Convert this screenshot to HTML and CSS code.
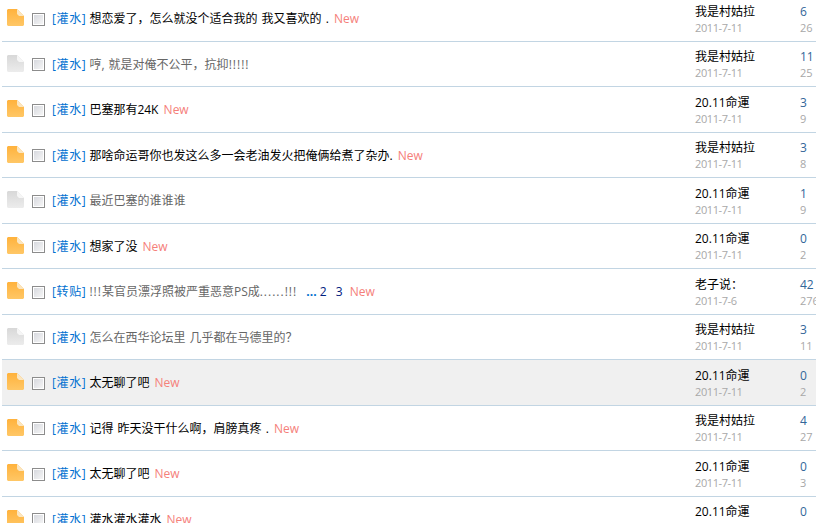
FILE: index.html
```html
<!DOCTYPE html>
<html lang="zh">
<head>
<meta charset="utf-8">
<title>主题列表</title>
<link rel="stylesheet" href="styles.css">
</head>
<body>
<svg class="defs" width="0" height="0" aria-hidden="true">
  <defs>
    <linearGradient id="hot" x1="0" y1="0" x2="0" y2="1"><stop offset="0" stop-color="#ffb23c"/><stop offset="1" stop-color="#ffc766"/></linearGradient>
    <linearGradient id="cold" x1="0" y1="0" x2="0" y2="1"><stop offset="0" stop-color="#d8d8d8"/><stop offset="1" stop-color="#ececec"/></linearGradient>
    <symbol id="doc-hot" viewBox="0 0 17 17"><path d="M1 0H10L17 7V16L16 17H1L0 16V1Z" fill="url(#hot)"/><path d="M10 0L17 7H12L10 5Z" fill="#fbe6c0"/></symbol>
    <symbol id="doc-cold" viewBox="0 0 17 17"><path d="M1 0H10L17 7V16L16 17H1L0 16V1Z" fill="url(#cold)"/><path d="M10 0L17 7H12L10 5Z" fill="#f6f6f6"/></symbol>
  </defs>
</svg>
<ul class="threads">
  <li class="row">
    <svg class="doc"><use href="#doc-hot"/></svg><span class="check"></span>
    <div class="title"><a class="tag">[灌水]</a> <a class="subject">想恋爱了，怎么就没个适合我的 我又喜欢的 .</a> <span class="new">New</span></div>
    <div class="author"><span class="name">我是村姑拉</span><span class="date">2011-7-11</span></div>
    <div class="stats"><span class="replies">6</span><span class="views">26</span></div>
  </li>
  <li class="row">
    <svg class="doc"><use href="#doc-cold"/></svg><span class="check"></span>
    <div class="title"><a class="tag">[灌水]</a> <a class="subject read">哼, 就是对俺不公平，抗抑<span class="wide">!!!!!</span></a></div>
    <div class="author"><span class="name">我是村姑拉</span><span class="date">2011-7-11</span></div>
    <div class="stats"><span class="replies">11</span><span class="views">25</span></div>
  </li>
  <li class="row">
    <svg class="doc"><use href="#doc-hot"/></svg><span class="check"></span>
    <div class="title"><a class="tag">[灌水]</a> <a class="subject">巴塞那有24K</a> <span class="new">New</span></div>
    <div class="author"><span class="name">20.11命運</span><span class="date">2011-7-11</span></div>
    <div class="stats"><span class="replies">3</span><span class="views">9</span></div>
  </li>
  <li class="row">
    <svg class="doc"><use href="#doc-hot"/></svg><span class="check"></span>
    <div class="title"><a class="tag">[灌水]</a> <a class="subject">那啥命运哥你也发这么多一会老油发火把俺俩给煮了杂办.</a> <span class="new">New</span></div>
    <div class="author"><span class="name">我是村姑拉</span><span class="date">2011-7-11</span></div>
    <div class="stats"><span class="replies">3</span><span class="views">8</span></div>
  </li>
  <li class="row">
    <svg class="doc"><use href="#doc-cold"/></svg><span class="check"></span>
    <div class="title"><a class="tag">[灌水]</a> <a class="subject read">最近巴塞的谁谁谁</a></div>
    <div class="author"><span class="name">20.11命運</span><span class="date">2011-7-11</span></div>
    <div class="stats"><span class="replies">1</span><span class="views">9</span></div>
  </li>
  <li class="row">
    <svg class="doc"><use href="#doc-hot"/></svg><span class="check"></span>
    <div class="title"><a class="tag">[灌水]</a> <a class="subject">想家了没</a> <span class="new">New</span></div>
    <div class="author"><span class="name">20.11命運</span><span class="date">2011-7-11</span></div>
    <div class="stats"><span class="replies">0</span><span class="views">2</span></div>
  </li>
  <li class="row">
    <svg class="doc"><use href="#doc-hot"/></svg><span class="check"></span>
    <div class="title"><a class="tag">[转贴]</a> <a class="subject read"><span class="wide">!!!</span>某官员漂浮照被严重恶意PS成<span class="wide">......!!!</span></a> <span class="pages"><span class="dots">...</span> <a>2</a> <a>3</a></span> <span class="new">New</span></div>
    <div class="author"><span class="name">老子说：</span><span class="date">2011-7-6</span></div>
    <div class="stats"><span class="replies">42</span><span class="views">276</span></div>
  </li>
  <li class="row">
    <svg class="doc"><use href="#doc-cold"/></svg><span class="check"></span>
    <div class="title"><a class="tag">[灌水]</a> <a class="subject read">怎么在西华论坛里 几乎都在马德里的？</a></div>
    <div class="author"><span class="name">我是村姑拉</span><span class="date">2011-7-11</span></div>
    <div class="stats"><span class="replies">3</span><span class="views">11</span></div>
  </li>
  <li class="row active">
    <svg class="doc"><use href="#doc-hot"/></svg><span class="check"></span>
    <div class="title"><a class="tag">[灌水]</a> <a class="subject">太无聊了吧</a> <span class="new">New</span></div>
    <div class="author"><span class="name">20.11命運</span><span class="date">2011-7-11</span></div>
    <div class="stats"><span class="replies">0</span><span class="views">2</span></div>
  </li>
  <li class="row">
    <svg class="doc"><use href="#doc-hot"/></svg><span class="check"></span>
    <div class="title"><a class="tag">[灌水]</a> <a class="subject">记得 昨天没干什么啊，肩膀真疼 .</a> <span class="new">New</span></div>
    <div class="author"><span class="name">我是村姑拉</span><span class="date">2011-7-11</span></div>
    <div class="stats"><span class="replies">4</span><span class="views">27</span></div>
  </li>
  <li class="row">
    <svg class="doc"><use href="#doc-hot"/></svg><span class="check"></span>
    <div class="title"><a class="tag">[灌水]</a> <a class="subject">太无聊了吧</a> <span class="new">New</span></div>
    <div class="author"><span class="name">20.11命運</span><span class="date">2011-7-11</span></div>
    <div class="stats"><span class="replies">0</span><span class="views">3</span></div>
  </li>
  <li class="row">
    <svg class="doc"><use href="#doc-hot"/></svg><span class="check"></span>
    <div class="title"><a class="tag">[灌水]</a> <a class="subject">灌水灌水灌水</a> <span class="new">New</span></div>
    <div class="author"><span class="name">20.11命運</span><span class="date">2011-7-11</span></div>
    <div class="stats"><span class="replies">0</span><span class="views">1</span></div>
  </li>
</ul>
</body>
</html>
```
FILE: styles.css
```css
html, body {
  margin: 0;
  height: 523px;
  overflow: hidden;
  background: #fff;
}
body {
  font: 12px/17px Tahoma, "Open Sans", "Noto Sans CJK SC", sans-serif;
  color: #000;
}
.defs { position: absolute; }
.threads {
  list-style: none;
  margin: -4px 0 0 2px;
  padding: 0;
  width: 830px;
}
.row {
  box-sizing: border-box;
  height: 45.5px;
  border-bottom: 1px solid #c2d5e3;
  display: flex;
  align-items: center;
  padding: 0 0 0 5px;
}
.active { background: #f0f0f0; }
.doc {
  width: 17px;
  height: 17px;
  flex: none;
  margin: -1px 8px 0 0;
}
.check {
  box-sizing: border-box;
  width: 13px;
  height: 13px;
  flex: none;
  margin: 2px 7px 0 0;
  border: 1px solid #8c8c8c;
  box-shadow: inset 0 0 0 1px #fff;
  background: linear-gradient(135deg, #d4d6dc, #f8f8f8);
}
.title {
  flex: none;
  width: 643px;
  white-space: nowrap;
  margin-top: 1px;
}
.tag { color: #0070d0; letter-spacing: 0.6px; }
.subject { word-spacing: 1px; }
.read { color: #666; }
.wide { letter-spacing: 1px; }
.new { color: #f5807a; margin-left: 2px; }
.pages { margin: 0 2px 0 6px; color: #002080; word-spacing: 6px; }
.dots { color: #0070d0; font-weight: 700; margin-right: -6px; }
.author, .stats {
  display: flex;
  flex-direction: column;
  flex: none;
  padding-top: 2px;
}
.author { width: 105px; }
.stats { width: 30px; }
.name { color: #000; }
.date { color: #a8a8a8; font-size: 11px; line-height: 16px; letter-spacing: -0.4px; }
.replies { color: #336699; }
.views { color: #a8a8a8; font-size: 11px; line-height: 16px; }
```
